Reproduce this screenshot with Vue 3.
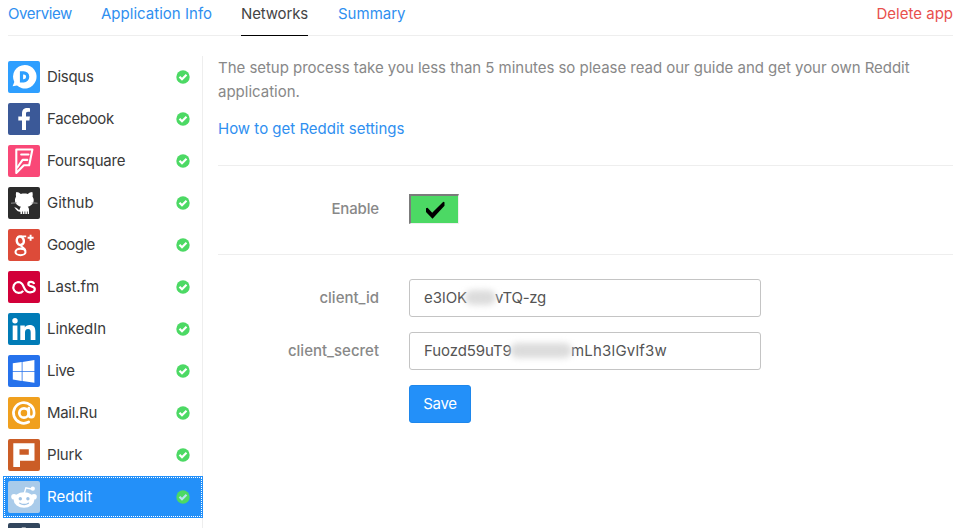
<script setup>
const tabs = [
  { label: 'Overview', cls: 't-overview' },
  { label: 'Application Info', cls: 't-info' },
  { label: 'Networks', cls: 't-networks', active: true },
  { label: 'Summary', cls: 't-summary' },
]
const networks = ['Disqus', 'Facebook', 'Foursquare', 'Github', 'Google', 'Last.fm', 'LinkedIn', 'Live', 'Mail.Ru', 'Plurk', 'Reddit']
const slug = (name) => name.toLowerCase().replace('.', '')
</script>

<template>
  <div class="page">
    <header class="tabs">
      <a v-for="t in tabs" :key="t.label" class="tab" :class="[t.cls, { active: t.active }]">{{ t.label }}</a>
      <a class="delete">Delete app</a>
    </header>

    <div class="columns">
      <nav class="sidebar">
        <a v-for="n in networks" :key="n" class="network" :class="{ active: n === 'Reddit' }">
          <svg class="logo" :class="'bg-' + slug(n)" viewBox="0 0 32 32">
            <g v-if="n === 'Disqus'">
              <path fill="#fff" d="M16.7 3.9a11.8 11.8 0 1 1-7.7 20.700L4.600 25.300l1.700-4.300A11.800 11.800 0 0 1 16.700 3.900z" />
              <path fill="none" stroke="#2e9fff" stroke-width="3.200" d="M13.500 11.800h2.200a4 4 0 0 1 0 8h-2.200z" />
            </g>
            <path v-else-if="n === 'Facebook'" fill="#fff" d="M14 27v-9.500h-3.700v-4H14v-3.100c0-3.600 2.100-5.400 5.200-5.400 1.400 0 2.400.1 2.800.2v3.600h-2c-1.600 0-2 .8-2 2v2.700h3.900l-.5 4H18V27z" />
            <g v-else-if="n === 'Foursquare'" fill="none" stroke="#fff" stroke-width="2.100" stroke-linejoin="round" stroke-linecap="round">
              <path d="M8.300 4.500h16.100l-3.200 15.700h-5.300L8.300 28z" />
              <path d="M20.500 9.500h-7.300M19.300 14.900h-4.700L9.300 22.500" />
            </g>
            <g v-else-if="n === 'Github'">
              <path fill="#fff" d="M8.300 5c1.700.1 3.300.9 4.500 1.900 2.200-.5 4.800-.5 7 0 1.200-1 2.800-1.800 4.500-1.900.6 1.700.5 3.300.2 4.500 3 4.500.2 9-4.800 10.300.8.800 1.300 1.600 1.300 3V27h-1.300v-2.500h-.8V27h-1.600v-2.500h-.8V27h-1.600v-2.500h-.8V27h-1.600v-2.300C8.700 25 8.500 22 6 20.600c3.600-.2 3.400 2.500 5.700 2.200.1-1.500.6-2.300 1.300-3-5-1.300-7.800-5.800-4.900-10.300C7.800 8.300 7.700 6.700 8.300 5z" />
              <path fill="none" stroke="#aaa" stroke-width=".8" d="M3 16.200l6-.4M29.500 16.200l-6-.4" />
            </g>
            <g v-else-if="n === 'Google'" fill="none" stroke="#fff">
              <ellipse cx="12.300" cy="11.800" rx="3.500" ry="4.300" stroke-width="2.500" transform="rotate(-12 12.300 11.800)" />
              <ellipse cx="12.500" cy="22.900" rx="5" ry="3.300" stroke-width="2.100" />
              <path stroke-width="1.900" d="M12.500 7.400h5.700M14.800 14.500c-2.800 1.800-1.700 2.900.2 4 1.200.8 2.200 1.800 2.500 3.500" />
              <path stroke-width="1.900" d="M22.600 5.700v6M19.600 8.700h6" />
            </g>
            <path v-else-if="n === 'Last.fm'" fill="none" stroke="#fff" stroke-width="2.200" d="M15.200 19.800A5.500 5.500 0 1 1 10 11c3.200 0 4.500 1.900 5.500 4.400 1.100 2.900 2.400 5.900 6.500 5.900 3.100 0 4.800-1.400 4.800-3.300 0-3.600-6.500-1.700-6.500-5 0-1.300 1-2.200 2.600-2.200 1.800 0 2.800.7 3.200 2.300" />
            <g v-else-if="n === 'LinkedIn'" fill="#fff">
              <circle cx="7" cy="7.800" r="2.700" />
              <path d="M4.700 12.400h4.700V27H4.700zM12.300 12.400h4.500v2c.8-1.400 2.300-2.400 4.700-2.400 4.600 0 5.900 2.600 5.900 7V27h-4.700v-7.200c0-2-.4-3.700-2.600-3.700-2.300 0-3.100 1.500-3.100 3.700V27h-4.700z" />
            </g>
            <path v-else-if="n === 'Live'" fill="#fff" d="M4.800 8.300l8.900-1.300v9H4.800zM14.500 6.900l11.900-1.800V16H14.500zM4.800 16.800h8.900v9.100l-8.900-1.300zM14.500 16.800h11.900v10.900L14.500 26z" />
            <g v-else-if="n === 'Mail.Ru'" fill="none" stroke="#fff" stroke-width="2.700">
              <circle cx="16" cy="16" r="4.700" />
              <path stroke-linecap="round" d="M20.800 11v6.500c0 1.700 1 2.700 2.500 2.700s2.800-1.400 2.800-4.200A10.300 10.300 0 1 0 20.700 25" />
            </g>
            <path v-else-if="n === 'Plurk'" fill="#fff" fill-rule="evenodd" d="M5.300 4.300h21.200v17.400H12V28H5.300zM11.500 10.300v5.400h9.300v-5.400z" />
            <g v-else>
              <g fill="#fff">
                <circle cx="6" cy="15.700" r="2.800" />
                <circle cx="26" cy="15.700" r="2.800" />
                <ellipse cx="16" cy="19" rx="10.300" ry="7.700" />
                <circle cx="24.800" cy="7.700" r="2.100" />
              </g>
              <path fill="none" stroke="#fff" stroke-width="1.400" d="M16.400 12l1.500-5.200 5.500 1.200" />
              <g fill="#9fc3e6">
                <circle cx="12.300" cy="17.700" r="1.700" />
                <circle cx="19.900" cy="17.700" r="1.700" />
              </g>
              <path fill="none" stroke="#9fc3e6" stroke-width="1.300" stroke-linecap="round" d="M11.800 22.200q4.300 2.600 8.600 0" />
            </g>
          </svg>
          <span class="name" :class="'n-' + slug(n)">{{ n }}</span>
          <svg class="check" viewBox="0 0 14 14">
            <circle cx="7" cy="7" r="6.700" fill="#4cd964" />
            <path fill="none" :stroke="n === 'Reddit' ? '#b5e3f0' : '#fff'" stroke-width="2.200" d="M3.500 6.800l2.500 2.500 4.500-4.500" />
          </svg>
        </a>
        <a class="network next">
          <svg class="logo bg-tumblr" viewBox="0 0 32 32">
            <path fill="#fff" d="M13.800 4.500h4v5.700h5v4h-5v6.300c0 3 2 3.300 4.800 1.800v4C17 28.500 13.500 27 13.500 22v-7.800H10v-3.500c2.400-.8 3.500-2.800 3.800-6.200z" />
          </svg>
        </a>
      </nav>

      <main class="content">
        <p class="intro"><span class="line-a">The setup process take you less than 5 minutes so please read our guide and get your own Reddit</span> <span class="line-b">application.</span></p>
        <a class="guide">How to get Reddit settings</a>

        <section class="enable">
          <span class="label l-enable">Enable</span>
          <span class="toggle">
            <svg viewBox="0 0 20 18"><path d="M1 7.300l1.500-.6 4.700 5L18.300.7l1.200.5v3.600L7.500 17.700 1 11z" /></svg>
          </span>
        </section>

        <section class="form">
          <span class="label l-id">client_id</span>
          <div class="field"><span class="id-a">e3lOK</span><i class="smudge small"></i><span class="id-b">vTQ-zg</span></div>
          <span class="label l-secret">client_secret</span>
          <div class="field"><span class="sec-a">Fuozd59uT9</span><i class="smudge large"></i><span class="sec-b">mLh3lGvlf3w</span></div>
          <button class="save">Save</button>
        </section>
      </main>
    </div>
  </div>
</template>

<style>
body { overflow: hidden; background: #fff; }
</style>

<style scoped>
.page {
  box-sizing: border-box;
  height: 528px;
  overflow: hidden;
  padding: 0 6px 0 3px;
  font-family: "Inter", "Liberation Sans", sans-serif;
  font-size: 15px;
  color: #888;
}
.tabs {
  display: flex;
  height: 35px;
  margin-left: 5px;
  border-bottom: 1px solid #eee;
  line-height: 27px;
  white-space: nowrap;
}
.tab { height: 35px; margin-right: 30px; color: #2f8ff0; border-bottom: 1px solid transparent; }
.tab.active { color: #444; border-bottom-color: #000; }
.t-overview { width: 63px; letter-spacing: -0.4px; }
.t-info { width: 110px; letter-spacing: 0.02px; }
.t-networks { width: 67px; letter-spacing: -0.15px; }
.delete { margin-left: auto; color: #e8504d; }
.columns { display: flex; padding-top: 20px; }
.sidebar { flex: none; width: 199px; border-right: 1px solid #eee; }
.network {
  display: flex;
  align-items: center;
  box-sizing: border-box;
  width: 200px;
  height: 42px;
  padding: 0 13px 0 5px;
  color: #3a3a3a;
}
.network.active {
  background: #2390f9;
  color: #fff;
  outline: 1px dotted #fff;
  outline-offset: -2px;
}
.name { margin-bottom: 2px; }
.n-disqus { letter-spacing: -0.3px; }
.n-facebook { letter-spacing: -0.35px; }
.n-foursquare { letter-spacing: -0.2px; }
.n-google { letter-spacing: -0.5px; }
.n-lastfm { letter-spacing: -0.1px; }
.n-linkedin { letter-spacing: -0.1px; }
.n-live { letter-spacing: -0.3px; }
.n-mailru { letter-spacing: -0.3px; }
.n-plurk { letter-spacing: -0.2px; }
.logo { width: 32px; height: 32px; border-radius: 2px; margin-right: 7px; }
.check { width: 14px; height: 14px; margin-left: auto; margin-bottom: 1px; }
.bg-disqus { background: #2e9fff; }
.bg-facebook { background: #3b5998; }
.bg-foursquare { background: #f94877; }
.bg-github { background: #2c2c2c; }
.bg-google { background: #dd4b39; }
.bg-lastfm { background: #d20039; }
.bg-linkedin { background: #007bb6; }
.bg-live { background: #2672ec; }
.bg-mailru { background: #f0a01e; }
.bg-plurk { background: #cb5d26; }
.bg-reddit { background: #a9cbea; }
.bg-tumblr { background: #32465d; }
.content { flex: 1; padding-left: 15px; }
.intro { margin: 0; line-height: 24px; white-space: nowrap; }
.line-a, .line-b { display: block; }
.line-a { letter-spacing: -0.032px; }
.guide { display: block; margin-top: 13px; line-height: 24px; color: #2f8ff0; }
.enable {
  display: grid;
  grid-template-columns: 161px auto;
  column-gap: 30px;
  align-items: center;
  box-sizing: border-box;
  height: 90px;
  padding-bottom: 2px;
  margin-top: 24px;
  border-top: 1px solid #eee;
  border-bottom: 1px solid #eee;
}
.label { font-weight: 500; text-align: right; white-space: nowrap; }
.l-enable { padding-bottom: 2px; letter-spacing: -0.15px; }
.l-id, .l-secret { padding-bottom: 1px; }
.toggle {
  display: flex;
  align-items: center;
  justify-content: center;
  box-sizing: border-box;
  width: 50px;
  height: 30px;
  border: 2px solid;
  border-width: 2px 1px 1px 2px;
  border-color: #7b7b7b #efefef #efefef #7b7b7b;
  background: #4cd964;
}
.toggle svg { width: 20px; height: 18px; margin-top: 1px; }
.form {
  display: grid;
  grid-template-columns: 161px 352px;
  column-gap: 30px;
  row-gap: 15px;
  align-items: center;
  padding-top: 24px;
}
.field {
  display: flex;
  align-items: center;
  box-sizing: border-box;
  height: 38px;
  padding: 0 0 1px 14px;
  border: 1px solid #c4c4c4;
  border-radius: 3px;
  color: #555;
  white-space: nowrap;
}
.id-a { width: 42px; }
.id-b { letter-spacing: -0.3px; }
.sec-a { width: 87px; letter-spacing: -0.1px; }
.sec-b { letter-spacing: 0.2px; }
.smudge { flex: none; height: 15px; border-radius: 8px; background: #dcdcdc; filter: blur(3px); }
.smudge.small { width: 31px; margin: 0 -1px; }
.smudge.large { width: 62px; margin: 0 -1px; }
.save {
  grid-column: 2;
  justify-self: start;
  width: 62px;
  height: 38px;
  padding: 0 0 1px;
  border: 1px solid #1e87ec;
  border-radius: 3px;
  background: #2390f9;
  color: #fff;
  font: 400 15px "Inter", "Liberation Sans", sans-serif;
  letter-spacing: -0.3px;
}
</style>
